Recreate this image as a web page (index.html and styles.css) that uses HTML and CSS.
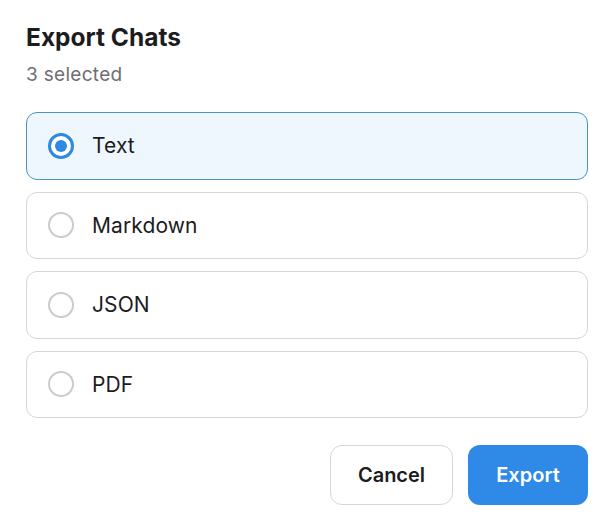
FILE: index.html
```html
<!DOCTYPE html>
<html>
<head>
<meta charset="utf-8">
<link rel="stylesheet" href="styles.css">
</head>
<body>
<div class="dialog">
  <h1 class="title">Export Chats</h1>
  <div class="subtitle">3 selected</div>
  <div class="options">
    <label class="option selected"><span class="radio"></span><span class="label">Text</span></label>
    <label class="option"><span class="radio"></span><span class="label">Markdown</span></label>
    <label class="option"><span class="radio"></span><span class="label">JSON</span></label>
    <label class="option"><span class="radio"></span><span class="label">PDF</span></label>
  </div>
  <div class="actions">
    <button class="btn btn-cancel">Cancel</button>
    <button class="btn btn-primary">Export</button>
  </div>
</div>
</body>
</html>
```
FILE: styles.css
```css
* { box-sizing: border-box; }
html, body { margin: 0; background: #ffffff; }
body {
  font-family: Inter, "Liberation Sans", sans-serif;
  color: #1c1c1e;
}
.dialog {
  padding: 22px 26px 0 26px;
  width: 614px;
}
.title {
  margin: 0;
  font-size: 24.5px;
  font-weight: 700;
  line-height: 30px;
  letter-spacing: 0;
}
.subtitle {
  margin-top: 11px;
  font-size: 19px;
  line-height: 24px;
  letter-spacing: 0.3px;
  color: #6e6e73;
}
.options {
  margin-top: 25px;
  display: flex;
  flex-direction: column;
  gap: 12px;
}
.option {
  display: flex;
  align-items: center;
  height: 67.5px;
  border: 1px solid #d6d6d6;
  border-radius: 11px;
  padding-left: 21px;
  background: #ffffff;
}
.option.selected {
  border-color: #4f93c4;
  background: #eff7fe;
}
.radio {
  width: 26px;
  height: 26px;
  border-radius: 50%;
  border: 2.5px solid #cbcbcb;
  flex: none;
  display: flex;
  align-items: center;
  justify-content: center;
}
.option.selected .radio {
  border: 3px solid #2f88e2;
  background: #ffffff;
}
.option.selected .radio::after {
  content: "";
  width: 12px;
  height: 12px;
  border-radius: 50%;
  background: #2f88e2;
}
.label {
  margin-left: 18px;
  font-size: 21px;
  font-weight: 400;
  letter-spacing: 0.1px;
  color: #1c1c1e;
}
.actions {
  margin-top: 27px;
  display: flex;
  justify-content: flex-end;
  gap: 15px;
}
.btn {
  height: 60px;
  border-radius: 12px;
  font-family: Inter, "Liberation Sans", sans-serif;
  font-size: 20px;
  font-weight: 600;
  cursor: pointer;
}
.btn-cancel {
  width: 123px;
  background: #ffffff;
  border: 1px solid #d6d6d6;
  color: #1c1c1e;
}
.btn-primary {
  width: 120px;
  background: #2e8ae6;
  border: none;
  color: #ffffff;
}
```
